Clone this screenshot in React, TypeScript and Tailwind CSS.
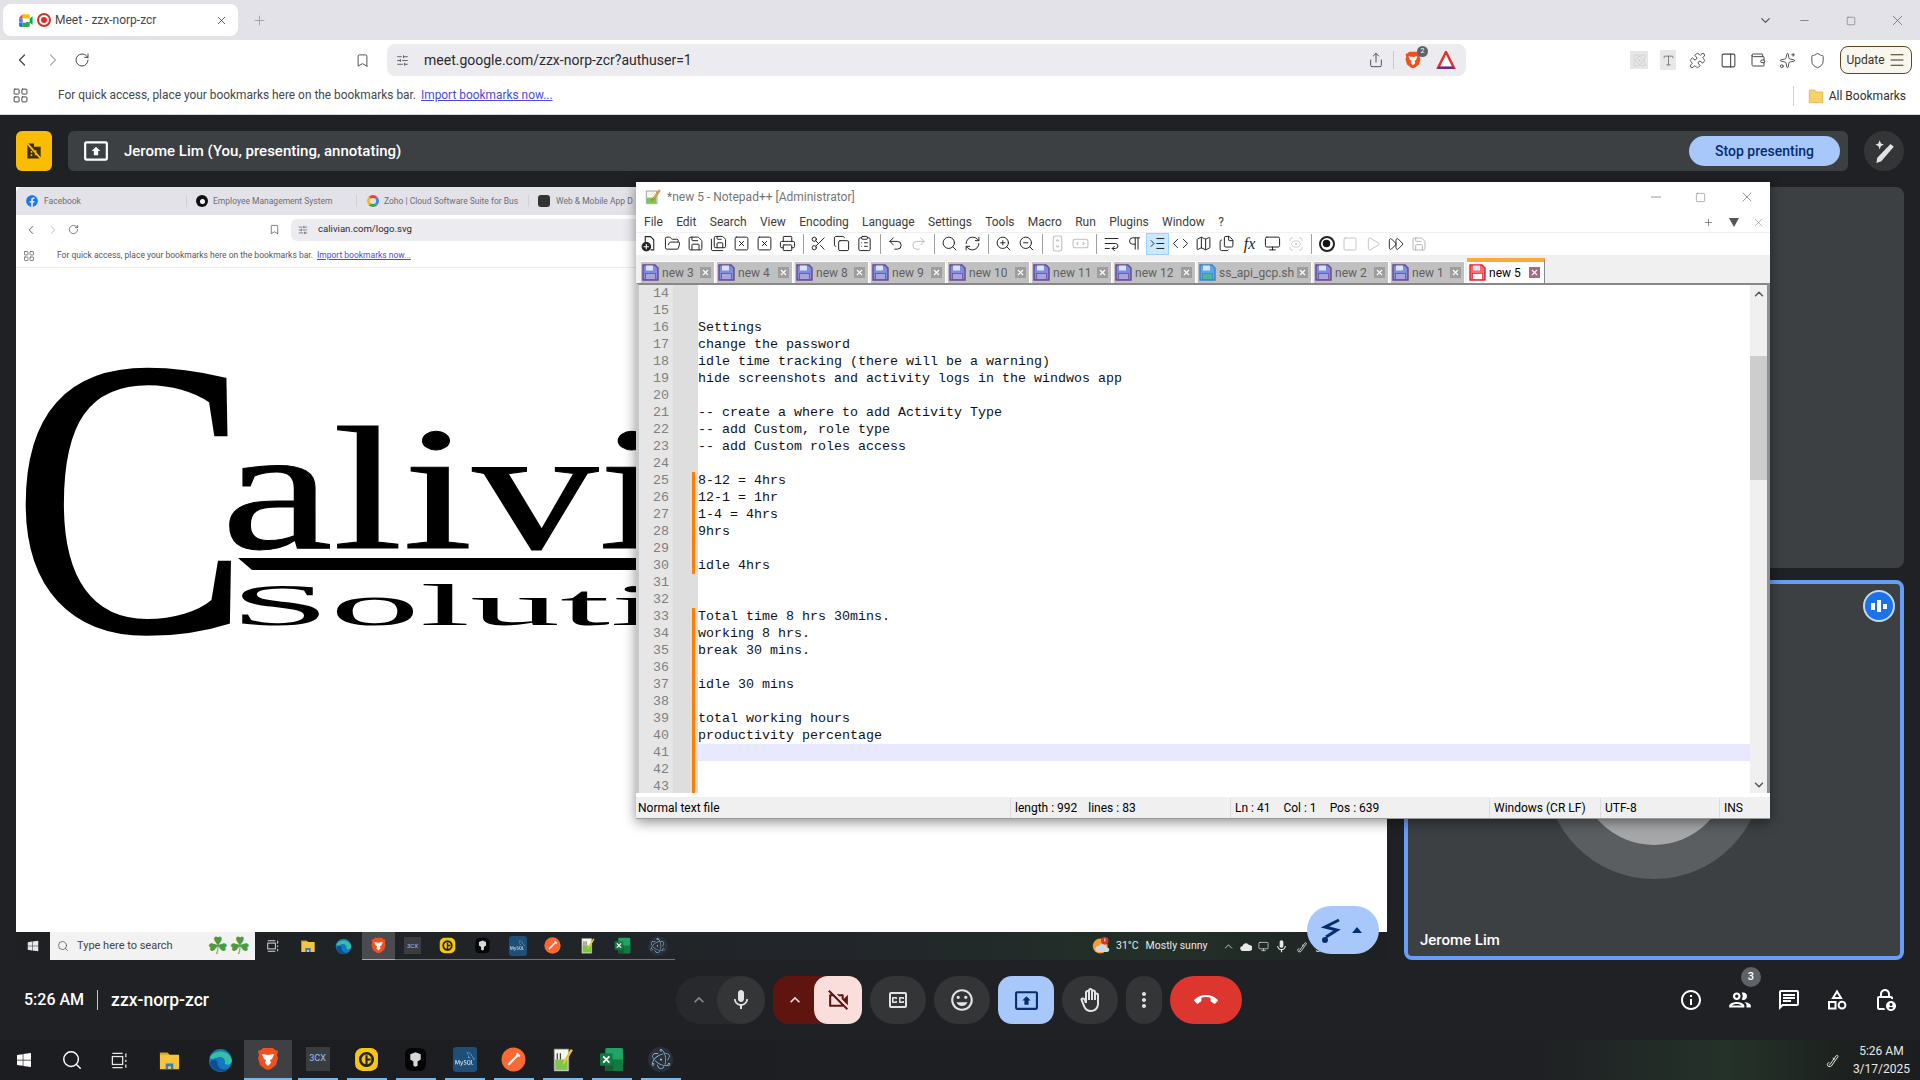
import {
  Atom,
  Bookmark,
  ChevronDown,
  ChevronLeft,
  ChevronRight,
  ChevronUp,
  Circle,
  ClipboardList,
  Code,
  Copy,
  FastForward,
  Files,
  FolderOpen,
  LayoutGrid,
  Map,
  Menu,
  Minus,
  Monitor,
  PanelRight,
  Pilcrow,
  Play,
  Plus,
  Printer,
  Puzzle,
  Redo2,
  RefreshCw,
  RotateCw,
  Save,
  SaveAll,
  Scissors,
  ScanEye,
  Search,
  Share,
  Shield,
  SlidersHorizontal,
  Sparkles,
  Square,
  SquareX,
  Undo2,
  Wallet,
  WrapText,
  X,
  ZoomIn,
  ZoomOut,
  IndentIncrease,
  Type,
} from "lucide-react";
import {
  MdCallEnd,
  MdKeyboardArrowUp,
  MdMic,
  MdMoreVert,
  MdOutlineBackHand,
  MdOutlineChat,
  MdOutlineClosedCaption,
  MdOutlineInfo,
  MdOutlineLockPerson,
  MdOutlineMood,
  MdOutlinePeople,
  MdOutlinePresentToAll,
  MdOutlineVideocamOff,
} from "react-icons/md";
import { SiElectron, SiMysql } from "react-icons/si";
import { FaFacebook, FaWindows } from "react-icons/fa";

const ROBOTO = "font-['Roboto',sans-serif]";

const CODE_LINES = [
  "", "", "Settings", "change the password", "idle time tracking (there will be a warning)",
  "hide screenshots and activity logs in the windwos app", "",
  "-- create a where to add Activity Type", "-- add Custom, role type", "-- add Custom roles access", "",
  "8-12 = 4hrs", "12-1 = 1hr", "1-4 = 4hrs", "9hrs", "", "idle 4hrs", "", "",
  "Total time 8 hrs 30mins.", "working 8 hrs.", "break 30 mins.", "", "idle 30 mins", "",
  "total working hours", "productivity percentage", "", "", "",
];

const NPP_TABS = [
  { name: "new 3", width: "w-[74px]" },
  { name: "new 4", width: "w-[76px]" },
  { name: "new 8", width: "w-[74px]" },
  { name: "new 9", width: "w-[75px]" },
  { name: "new 10", width: "w-[82px]" },
  { name: "new 11", width: "w-[80px]" },
  { name: "new 12", width: "w-[82px]" },
  { name: "ss_api_gcp.sh", width: "w-[114px]", blue: true },
  { name: "new 2", width: "w-[75px]" },
  { name: "new 1", width: "w-[74px]" },
];

const NPP_MENU = ["File", "Edit", "Search", "View", "Encoding", "Language", "Settings", "Tools", "Macro", "Run", "Plugins", "Window", "?"];

type ToolIconProps = { size?: number; strokeWidth?: number; className?: string };

function NewFile({ size = 17, className }: ToolIconProps) {
  return (
    <svg width={size} height={size} viewBox="0 0 16 16" fill="none" stroke="currentColor" className={className}>
      <path d="M4 7V1.500h5l3 3V14H9" />
      <circle cx="5" cy="11" r="4" fill="#222" />
      <path d="M5 8.500v5M2.500 11h5" stroke="#fff" />
    </svg>
  );
}

function SyncV({ size = 17, className }: ToolIconProps) {
  return (
    <svg width={size} height={size} viewBox="0 0 16 16" fill="none" stroke="currentColor" className={className}>
      <rect x="4" y="1" width="8" height="14" rx="2" />
      <path d="m6.500 6 1.500-1.500L9.500 6M6.500 10 8 11.500 9.500 10" />
    </svg>
  );
}

function SyncH({ size = 17, className }: ToolIconProps) {
  return (
    <svg width={size} height={size} viewBox="0 0 16 16" fill="none" stroke="currentColor" className={className}>
      <rect x="1" y="4" width="14" height="8" rx="2" />
      <path d="M6 6.500 4.500 8 6 9.500M10 6.500 11.500 8 10 9.500" />
    </svg>
  );
}

const NPP_TOOLS = [
  [NewFile, FolderOpen, Save, SaveAll, SquareX, SquareX, Printer],
  [Scissors, Copy, ClipboardList],
  [Undo2, Redo2],
  [Search, RefreshCw],
  [ZoomIn, ZoomOut],
  [SyncV, SyncH],
];

function MeetLogo({ size = 16 }: { size?: number }) {
  return (
    <svg width={size} height={size} viewBox="0 0 24 24">
      <path d="M3 8 8 3v6H3z" fill="#ea4335" />
      <path d="M3 9h5v6H3z" fill="#4285f4" />
      <path d="M3 15h5v6H5a2 2 0 0 1-2-2z" fill="#1a73e8" />
      <path d="M8 3h8a2 2 0 0 1 2 2v4h-5V9H8z" fill="#fbbc04" />
      <path d="M8 15h5v-1h5v5a2 2 0 0 1-2 2H8z" fill="#34a853" />
      <path d="m18 9 4-3v12l-4-3z" fill="#00ac47" />
    </svg>
  );
}

function BraveLogo({ size = 20 }: { size?: number }) {
  return (
    <svg width={size} height={size} viewBox="0 0 24 24">
      <path d="M12 1h5l2 2 3 1-1 4 1 3-2 7-5 4-3 1-3-1-5-4-2-7 1-3-1-4 3-1 2-2z" fill="#f1501f" />
      <path d="M12 8 6 7l2 5 2 1-1 3 3 3 3-3-1-3 2-1 2-5z" fill="#fff" />
    </svg>
  );
}

function FolderIcon({ size = 22 }: { size?: number }) {
  return (
    <svg width={size} height={size} viewBox="0 0 24 24">
      <path d="M2 4h8l2 2h10v15H2z" fill="#f5c542" />
      <path d="M2 4h8l2 2H2z" fill="#d9a520" />
      <path d="M8 21v-6h8v6h-2.500v-3h-3v3z" fill="#2f7fc1" />
    </svg>
  );
}

function EdgeIcon({ size = 22 }: { size?: number }) {
  return (
    <svg width={size} height={size} viewBox="0 0 24 24">
      <circle cx="12" cy="12" r="11" fill="#1377c4" />
      <path d="M2 9C5 2 20 0 23 12c0 4-5 5-7 3 2-4-3-8-7-6-4 1-6 3-7 0z" fill="#37c0a0" />
      <path d="M9 14c0 6 6 8 10 6-4 5-15 3-17-6 1-3 7-4 7 0z" fill="#0c4f8f" />
    </svg>
  );
}

function TaskView({ size = 18 }: { size?: number }) {
  return (
    <svg width={size} height={size} viewBox="0 0 24 24" fill="none" stroke="#e8e8e8" strokeWidth="1.600">
      <rect x="3" y="7" width="13" height="10" />
      <path d="M3 3h13M3 21h13M20 3v5M20 11v3M20 17v4" />
    </svg>
  );
}

function ThreeCx({ size = 24 }: { size?: number }) {
  return (
    <span
      className={`flex items-center justify-center bg-[#3a3c40] text-[#9fc3e8] ${ROBOTO} ${size > 20 ? "h-[24px] w-[24px] text-[9px]" : "h-[17px] w-[17px] text-[6px]"}`}
    >
      3CX
    </span>
  );
}

function YellowApp({ size = 24 }: { size?: number }) {
  return (
    <svg width={size} height={size} viewBox="0 0 24 24">
      <rect x="1" y="1" width="22" height="22" rx="7" fill="#f5c518" />
      <circle cx="12" cy="12" r="6" fill="none" stroke="#222" strokeWidth="2.500" />
      <path d="M12 8v11M12 12h4" stroke="#222" strokeWidth="2" />
    </svg>
  );
}

function CubeApp({ size = 24 }: { size?: number }) {
  return (
    <svg width={size} height={size} viewBox="0 0 24 24">
      <rect x="2" y="1" width="20" height="22" rx="6" fill="#050505" />
      <path d="M7 7l5-2 5 2v5l-3 2v4l-2 1-2-1v-4l-3-2z" fill="#d8d8d8" />
    </svg>
  );
}

function MysqlApp({ size = 24 }: { size?: number }) {
  return (
    <span className={`flex items-center justify-center rounded-[3px] bg-[#1d4f79] text-[#d4e4f0] ${size > 20 ? "h-[25px] w-[24px]" : "h-[20px] w-[18px]"}`}>
      <SiMysql size={size > 20 ? 20 : 15} />
    </span>
  );
}

function PostmanApp({ size = 24 }: { size?: number }) {
  return (
    <svg width={size} height={size} viewBox="0 0 24 24">
      <circle cx="12" cy="12" r="11.500" fill="#f76935" />
      <path d="M7 17 17 7M15 6l3 3" stroke="#fff" strokeWidth="2" fill="none" />
    </svg>
  );
}

function NotepadApp({ size = 24 }: { size?: number }) {
  return (
    <svg width={size} height={size} viewBox="0 0 24 24">
      <path d="M4 2h14v21H4z" fill="#f4f8e8" stroke="#888" strokeWidth="0.700" />
      <path d="M5 12h12v10H5z" fill="#7ec54a" />
      <path d="M7 6v6M10 6v6" stroke="#444" strokeWidth="1.200" />
      <path d="M12 15 20 2l2 1-8 13-2 1z" fill="#f0c030" />
    </svg>
  );
}

function ExcelApp({ size = 24 }: { size?: number }) {
  return (
    <svg width={size} height={size} viewBox="0 0 24 24">
      <rect x="6" y="1" width="17" height="22" rx="1.500" fill="#21a366" />
      <rect x="14" y="12" width="9" height="11" fill="#107c41" />
      <rect x="6" y="12" width="8" height="11" fill="#185c37" />
      <rect x="1" y="6" width="12" height="12" rx="1" fill="#107c41" />
      <path d="m4 9 6 6M10 9l-6 6" stroke="#fff" strokeWidth="1.600" />
    </svg>
  );
}

function ElectronApp({ size = 24 }: { size?: number }) {
  return (
    <span className={`flex items-center justify-center rounded-full bg-[#2b2e3b] text-[#9feaf9] ${size > 20 ? "h-[25px] w-[25px]" : "h-[20px] w-[20px]"}`}>
      <SiElectron size={size > 20 ? 20 : 15} />
    </span>
  );
}

function WeatherIcon() {
  return (
    <svg width="18" height="18" viewBox="0 0 24 24">
      <circle cx="11" cy="12" r="10" fill="#f59e2c" />
      <path d="M8 20a4 4 0 0 1 1-8 6 6 0 0 1 11 2 3 3 0 0 1 0 6z" fill="#cfd8e6" />
      <circle cx="17" cy="5" r="5" fill="#d9342b" />
      <rect x="16.500" y="2" width="1.200" height="4" fill="#fff" />
    </svg>
  );
}

function PenTray({ size = 16 }: { size?: number }) {
  return (
    <svg width={size} height={size} viewBox="0 0 24 24" fill="none" stroke="#e8e8e8" strokeWidth="1.500">
      <path d="M8 20 18 6c1-2 3-1 3 1L11 21c-2 2-6 1-6-2 0-2 1-3 3-3M13 9l3 2" />
    </svg>
  );
}

function ShapesIcon() {
  return (
    <svg width="24" height="24" viewBox="0 0 24 24" fill="none" stroke="currentColor" strokeWidth="2">
      <path d="M12 3.500 16 10H8z" />
      <rect x="4" y="14" width="6.500" height="6.500" />
      <circle cx="17" cy="17.200" r="3.400" />
    </svg>
  );
}

function AnnotatePen() {
  return (
    <svg width="26" height="26" viewBox="0 0 24 24" fill="currentColor">
      <path d="M18 5.500 21 8 9.500 21.500 5 23l.8-4.700z" />
      <path d="M8 2l1.200 3L12 6.200 9.200 7.400 8 10.500 6.800 7.400 4 6.200l2.800-1.200z" />
    </svg>
  );
}

const TASK_APPS = [ThreeCx, YellowApp, CubeApp, MysqlApp, PostmanApp, NotepadApp, ExcelApp, ElectronApp];

function ChromeTabStrip() {
  return (
    <div className="flex h-[40px] shrink-0 items-end bg-[#e3e2e8] pl-[3px]">
      <div className="mb-[4px] flex h-[32px] w-[235px] items-center rounded-[8px] bg-white pl-[14px] pr-[10px]">
        <MeetLogo size={17} />
        <span className="ml-[3px] flex h-[14px] w-[14px] items-center justify-center rounded-full border-2 border-[#d93025]">
          <span className="h-[6px] w-[6px] rounded-full bg-[#d93025]" />
        </span>
        <span className="ml-[4px] text-[12px] text-[#45474c]">Meet - zzx-norp-zcr</span>
        <X size={13} className="ml-auto text-[#45474c]" strokeWidth={1.6} />
      </div>
      <Plus size={15} strokeWidth={1.6} className="mb-[12px] ml-[14px] text-[#a6a6ac]" />
      <div className="mb-[11px] ml-auto flex items-center text-[#55565c]">
        <ChevronDown size={15} strokeWidth={2} />
        <Minus size={13} strokeWidth={1.2} className="ml-[25px]" />
        <Square size={10} strokeWidth={1.2} className="ml-[35px]" />
        <X size={17} strokeWidth={1} className="ml-[33px] mr-[14px]" />
      </div>
    </div>
  );
}

function ChromeToolbar() {
  return (
    <div className="flex h-[40px] shrink-0 items-center bg-white pl-[12px] text-[#45474c]">
      <ChevronLeft size={20} strokeWidth={1.5} />
      <ChevronRight size={20} strokeWidth={1.5} className="ml-[11px] text-[#b0b0b4]" />
      <RotateCw size={16} strokeWidth={1.5} className="ml-[11px]" />
      <Bookmark size={15} strokeWidth={1.5} className="ml-[265px]" />
      <div className="ml-[17px] flex h-[32px] w-[1079px] items-center rounded-[8px] bg-[#ecebf0] pl-[9px] pr-[10px]">
        <SlidersHorizontal size={13} strokeWidth={1.5} />
        <span className="ml-[15px] text-[14px] text-[#2a2b2f]">meet.google.com/zzx-norp-zcr?authuser=1</span>
        <Share size={16} strokeWidth={1.4} className="ml-auto" />
        <span className="ml-[9px] h-[18px] w-px bg-[#c8c8cc]" />
        <span className="relative ml-[10px]">
          <BraveLogo size={18} />
          <span className="absolute -right-[6px] -top-[5px] flex h-[11px] w-[11px] items-center justify-center rounded-full bg-[#5f6368] text-[7px] text-white">2</span>
        </span>
        <svg width="20" height="18" viewBox="0 0 20 18" className="ml-[14px]">
          <path d="M10 1 18 17H2z" fill="#fff" stroke="#e0342a" strokeWidth="2.500" />
          <path d="M3 15.500h14L18.500 18h-17z" fill="#662d91" />
        </svg>
      </div>
      <div className="ml-[164px] flex h-[18px] w-[18px] items-center justify-center bg-[#e6e6e6] text-[#c8c8c8]">
        <Atom size={15} strokeWidth={1.2} />
      </div>
      <div className="ml-[12px] flex h-[20px] w-[16px] items-center justify-center bg-[#e8e8e8] text-[#6b6b6b]">
        <Type size={13} strokeWidth={1.5} />
      </div>
      <Puzzle size={17} strokeWidth={1.3} className="ml-[13px]" />
      <PanelRight size={17} strokeWidth={1.5} className="ml-[14px]" />
      <Wallet size={16} strokeWidth={1.5} className="ml-[13px]" />
      <Sparkles size={17} strokeWidth={1.3} className="ml-[13px]" />
      <Shield size={17} strokeWidth={1.3} className="ml-[13px]" />
      <div className="ml-[14px] flex h-[28px] w-[72px] items-center justify-center gap-[3px] rounded-[8px] border border-[#5a4a20] bg-[#f8f6ee] text-[12px] text-[#3c3418]">
        Update <Menu size={18} strokeWidth={1.4} />
      </div>
    </div>
  );
}

function BookmarksBar() {
  return (
    <div className="flex h-[35px] shrink-0 items-center border-b border-[#d6d6d8] bg-white pb-[3px] pl-[12px] text-[11.900px] text-[#45474c]">
      <LayoutGrid size={17} strokeWidth={1.4} />
      <span className="ml-[29px]">For quick access, place your bookmarks here on the bookmarks bar.</span>
      <span className="ml-[5px] text-[#4a4adf] underline">Import bookmarks now...</span>
      <span className="ml-auto h-[20px] w-px bg-[#d0d0d4]" />
      <svg width="16" height="16" viewBox="0 0 24 24" className="ml-[14px]">
        <path d="M2 3h8l2 3h10v16H2z" fill="#fad165" stroke="#d3a940" />
      </svg>
      <span className="ml-[5px] mr-[14px] text-[12px] text-[#2f3034]">All Bookmarks</span>
    </div>
  );
}

function MeetBar() {
  return (
    <div className="flex h-[40px] gap-[16px]">
      <div className="flex w-[36px] items-center justify-center rounded-[6px] bg-[#fbbc04] text-[#3c3000]">
        <svg width="20" height="20" viewBox="0 0 24 24" fill="currentColor">
          <path d="M4 3h8v4h8v14H4z" />
          <path d="M3 2 21 22" stroke="#fbbc04" strokeWidth="2" />
          <path d="M8 8h2v2H8zM8 12h2v2H8zM8 16h2v2H8zM13 11h2v2h-2zM13 15h2v2h-2z" fill="#fbbc04" />
        </svg>
      </div>
      <div className="flex w-[1780px] items-center rounded-[6px] bg-[#3c4043] pl-[15px] pr-[8px] text-white">
        <MdOutlinePresentToAll size={26} />
        <span className="ml-[15px] text-[15px] font-medium">Jerome Lim (You, presenting, annotating)</span>
        <button className="ml-auto h-[30px] w-[151px] rounded-full bg-[#a8c7fa] text-[14px] font-medium text-[#062e6f]">Stop presenting</button>
      </div>
      <div className="flex w-[40px] items-center justify-center rounded-full bg-[#333537] text-[#e3e3e3]">
        <AnnotatePen />
      </div>
    </div>
  );
}

function SharedScreen() {
  return (
    <div className="flex w-[1371px] flex-col overflow-hidden bg-white">
      <div className="flex h-[28px] shrink-0 items-center rounded-t-[6px] bg-[#e3e2e8] pl-[10px] text-[8.500px] text-[#6c6d72]">
        <div className="flex w-[161px] items-center border-r border-[#cfcfd4]">
          <FaFacebook size={12} className="text-[#1877f2]" />
          <span className="ml-[6px]">Facebook</span>
        </div>
        <div className="flex w-[170px] items-center border-r border-[#cfcfd4] pl-[9px]">
          <span className="flex h-[12px] w-[12px] items-center justify-center rounded-full bg-[#111]">
            <span className="h-[5px] w-[5px] rounded-full bg-white" />
          </span>
          <span className="ml-[5px]">Employee Management System</span>
        </div>
        <div className="flex w-[172px] items-center border-r border-[#cfcfd4] pl-[10px]">
          <span className="h-[12px] w-[12px] rounded-full border-[3px] border-b-[#34a853] border-l-[#fbbc04] border-r-[#4285f4] border-t-[#ea4335]" />
          <span className="ml-[5px] whitespace-nowrap">Zoho | Cloud Software Suite for Bus</span>
        </div>
        <div className="flex items-center pl-[9px]">
          <span className="h-[12px] w-[12px] rounded-[3px] bg-[#333]" />
          <span className="ml-[6px]">Web &amp; Mobile App D</span>
        </div>
      </div>
      <div className="flex h-[28px] shrink-0 items-center bg-white pl-[8px] pt-[1px] text-[#45474c]">
        <ChevronLeft size={14} strokeWidth={1.5} />
        <ChevronRight size={14} strokeWidth={1.5} className="ml-[8px] text-[#b5b5b8]" />
        <RotateCw size={11} strokeWidth={1.5} className="ml-[8px]" />
        <Bookmark size={11} strokeWidth={1.5} className="ml-[190px]" />
        <div className="ml-[11px] flex h-[22px] w-[400px] items-center rounded-l-[6px] bg-[#ecebf0] pl-[7px]">
          <SlidersHorizontal size={10} strokeWidth={1.5} />
          <span className="ml-[10px] text-[9.600px] text-[#2a2b2f]">calivian.com/logo.svg</span>
        </div>
      </div>
      <div className="flex h-[25px] shrink-0 items-center border-b border-[#ececee] pl-[7px] pt-[1px] text-[8.500px] text-[#55565a]">
        <LayoutGrid size={12} strokeWidth={1.4} />
        <span className="ml-[22px]">For quick access, place your bookmarks here on the bookmarks bar.</span>
        <span className="ml-[4px] text-[#4a4adf] underline">Import bookmarks now...</span>
      </div>
      <div className="relative flex-1 overflow-hidden font-['Liberation_Serif',serif] text-black">
        <span className="absolute left-[-4px] top-[32px] origin-top-left scale-x-[0.9] text-[396px] leading-none [-webkit-text-stroke:2px_black]">C</span>
        <span className="absolute left-[205px] top-[133px] origin-top-left scale-x-[1.43] text-[176px] leading-none [-webkit-text-stroke:1px_black]">alivi</span>
        <svg width="700" height="14" viewBox="0 0 700 14" className="absolute left-[222px] top-[290px]">
          <path d="M0 0h700v12H14z" fill="#000" />
        </svg>
        <span className="absolute left-[214px] top-[307px] origin-top-left scale-x-[3] text-[60px] leading-none">Soluti</span>
      </div>
      <InnerTaskbar />
    </div>
  );
}

function InnerTaskbar() {
  return (
    <div className="flex h-[28px] shrink-0 items-center bg-[linear-gradient(90deg,#1e2023_0%,#22262a_60%,#233028_85%,#1e2023_100%)] text-[#e8e8e8]">
      <div className="flex w-[34px] justify-center">
        <FaWindows size={12} />
      </div>
      <div className="flex h-[28px] w-[205px] items-center bg-[#f2f2f2] pl-[7px] text-[11px] text-[#444]">
        <Search size={12} strokeWidth={1.4} />
        <span className="ml-[8px]">Type here to search</span>
        <span className="ml-auto mr-[4px] flex text-[24px] leading-none text-[#4f9a3f]">☘☘</span>
      </div>
      <div className="flex items-center">
        <div className="flex w-[35px] justify-center">
          <TaskView size={14} />
        </div>
        <div className="flex w-[36px] justify-center">
          <FolderIcon size={16} />
        </div>
        <div className="flex w-[35px] justify-center">
          <EdgeIcon size={17} />
        </div>
        <div className="ml-[1px] flex h-[28px] w-[33px] items-center justify-center border-b border-[#76b9ed] bg-[#4a4b4e]">
          <BraveLogo size={17} />
        </div>
        {TASK_APPS.map((App, i) => (
          <div key={i} className="flex h-[28px] w-[35px] items-center justify-center border-b border-[#4a7ea8]">
            <App size={17} />
          </div>
        ))}
      </div>
      <div className="ml-[417px] flex items-center">
        <WeatherIcon />
        <span className="ml-[6px] text-[10.500px]">31°C</span>
        <span className="ml-[7px] text-[10.500px]">Mostly sunny</span>
        <ChevronUp size={13} strokeWidth={1.5} className="ml-[15px]" />
        <svg width="12" height="9" viewBox="0 0 24 18" className="ml-[5px]" fill="#e8e8e8">
          <path d="M6 18a5 5 0 0 1-1-10 7 7 0 0 1 13-2 6 6 0 0 1 1 12z" />
        </svg>
        <Monitor size={11} strokeWidth={1.5} className="ml-[6px]" />
        <MdMic size={15} className="ml-[5px]" />
        <span className="ml-[6px]">
          <PenTray size={13} />
        </span>
        <span className="ml-[7px] self-end text-[9px] leading-[12px]">3/17/2025</span>
      </div>
    </div>
  );
}

function FloppyIcon({ kind }: { kind: "purple" | "blue" | "red" }) {
  const colors = {
    purple: { edge: "#6a4590", fill: "#7d8fdc", low: "#a9a4df" },
    blue: { edge: "#3b82c4", fill: "#5aa8ee", low: "#4fb59a" },
    red: { edge: "#e0232e", fill: "#ff6b70", low: "#fff" },
  }[kind];
  return (
    <svg width="17" height="17" viewBox="0 0 17 17" className="shrink-0">
      <path d="M1 1h12l3 3v12H1z" fill={colors.fill} stroke={colors.edge} strokeWidth="1.400" />
      <rect x="4" y="1.500" width="7" height="5" fill="#d8e2f8" />
      <rect x="3.500" y="9.500" width="10" height="6" fill={colors.low} stroke={colors.edge} strokeWidth="0.700" />
    </svg>
  );
}

function NppTab({ name, width, blue }: { name: string; width: string; blue?: boolean }) {
  return (
    <div className={`flex h-[22px] items-center border-r border-t border-white bg-[#c0c0c0] pl-[1px] pr-[3px] text-[12px] text-[#5f5f5f] ${width}`}>
      <FloppyIcon kind={blue ? "blue" : "purple"} />
      <span className="ml-[3px] truncate">{name}</span>
      <span className="ml-auto flex h-[11px] w-[11px] shrink-0 items-center justify-center bg-[#9d9d9d] text-white">
        <X size={9} strokeWidth={3} />
      </span>
    </div>
  );
}

function NotepadWindow() {
  return (
    <div className={`absolute left-[636px] top-[182px] flex h-[637px] w-[1134px] flex-col bg-white shadow-[0_3px_12px_rgba(0,0,0,0.45)] ${ROBOTO}`}>
      <div className="flex h-[30px] shrink-0 items-center pl-[9px] text-[12px] text-[#757575]">
        <svg width="16" height="16" viewBox="0 0 24 24">
          <path d="M2 3h16v19H2z" fill="#f4f8e8" stroke="#777" />
          <path d="M3 13h14v8H3z" fill="#7ec54a" />
          <path d="M11 15 21 1l2 2-10 13-3 1z" fill="#e9b92f" stroke="#8b1a1a" strokeWidth="0.600" />
        </svg>
        <span className="ml-[6px]">*new 5 - Notepad++ [Administrator]</span>
        <Minus size={16} strokeWidth={1} className="ml-auto text-[#666]" />
        <Square size={11} strokeWidth={1} className="ml-[31px] text-[#555]" />
        <X size={16} strokeWidth={1} className="ml-[33px] mr-[15px] text-[#666]" />
      </div>
      <div className="flex h-[20px] shrink-0 items-center gap-[13.300px] pl-[8px] text-[12px] text-[#3c3c3c]">
        {NPP_MENU.map((item) => (
          <span key={item}>{item}</span>
        ))}
        <Plus size={11} strokeWidth={1.2} className="ml-auto text-[#333]" />
        <svg width="10" height="9" viewBox="0 0 10 9" className="ml-[1px]">
          <path d="M0 0h10L5 9z" fill="#555" />
        </svg>
        <X size={13} strokeWidth={1} className="mr-[5px] text-[#777]" />
      </div>
      <div className="flex h-[24px] shrink-0 items-center border-y border-[#f0f0f0] pb-[1px] pl-[2px] text-[#222]">
        {NPP_TOOLS.map((group, g) => (
          <div key={g} className="flex items-center">
            {g > 0 && <span className="mx-[3.500px] h-[20px] w-px bg-[#a0a0a0]" />}
            {group.map((Icon, i) => (
              <span key={i} className="flex w-[23px] justify-center">
                <Icon size={17} strokeWidth={1.4} className={g === 2 && i === 1 ? "text-[#bbb]" : g === 5 ? "text-[#c0c0c0]" : ""} />
              </span>
            ))}
          </div>
        ))}
        <span className="mx-[3.500px] h-[20px] w-px bg-[#a0a0a0]" />
        <span className="flex w-[23px] justify-center">
          <WrapText size={17} strokeWidth={1.4} />
        </span>
        <span className="flex w-[23px] justify-center">
          <Pilcrow size={17} strokeWidth={1.4} />
        </span>
        <span className="flex h-[22px] w-[23px] items-center justify-center border border-[#99d1ff] bg-[#cce8ff]">
          <IndentIncrease size={17} strokeWidth={1.4} />
        </span>
        <span className="flex w-[23px] justify-center">
          <Code size={17} strokeWidth={1.4} />
        </span>
        <span className="flex w-[23px] justify-center">
          <Map size={17} strokeWidth={1.4} />
        </span>
        <span className="flex w-[23px] justify-center">
          <Files size={17} strokeWidth={1.4} />
        </span>
        <span className="flex w-[23px] justify-center font-['Liberation_Serif',serif] text-[16px] italic leading-none">fx</span>
        <span className="flex w-[23px] justify-center">
          <Monitor size={17} strokeWidth={1.4} />
        </span>
        <span className="flex w-[23px] justify-center">
          <ScanEye size={16} strokeWidth={1.2} className="text-[#c0c0c0]" />
        </span>
        <span className="mx-[3.500px] h-[20px] w-px bg-[#a0a0a0]" />
        <span className="flex w-[23px] justify-center">
          <span className="flex h-[16px] w-[16px] items-center justify-center rounded-full border-2 border-[#222]">
            <Circle size={9} fill="#111" strokeWidth={0} />
          </span>
        </span>
        <span className="flex w-[23px] justify-center">
          <Square size={16} strokeWidth={1} className="text-[#a8a8a8]" />
        </span>
        <span className="flex w-[23px] justify-center">
          <Play size={16} strokeWidth={1} className="text-[#a8a8a8]" />
        </span>
        <span className="flex w-[23px] justify-center">
          <FastForward size={16} strokeWidth={1.4} />
        </span>
        <span className="flex w-[23px] justify-center">
          <Save size={16} strokeWidth={1.3} className="text-[#aaa]" />
        </span>
      </div>
      <div className="flex h-[27px] shrink-0 items-end gap-[2px] bg-[#f0f0f0] pl-[5px]">
        {NPP_TABS.map((tab) => (
          <NppTab key={tab.name} {...tab} />
        ))}
        <div className="flex h-[25px] w-[78px] items-center border-r border-[#888] border-t-[4px] border-t-[#faa93a] bg-white pl-[2px] pr-[4px] text-[12px] text-black">
          <FloppyIcon kind="red" />
          <span className="ml-[3px]">new 5</span>
          <span className="ml-auto flex h-[11px] w-[11px] items-center justify-center bg-[#a86a80] text-white">
            <X size={9} strokeWidth={3} />
          </span>
        </div>
      </div>
      <div className="flex min-h-0 flex-1 border-l-[3px] border-r-[3px] border-t-2 border-[#a0a0a0] border-l-[#c8c8c8] border-r-[#8f8f8f] border-t-[#888]">
        <div className="min-w-0 flex-1 overflow-hidden font-['Liberation_Mono',monospace] text-[13.330px] leading-[17px]">
          {CODE_LINES.map((line, i) => {
            const no = i + 14;
            const changed = (no >= 25 && no <= 30) || no >= 33;
            return (
              <div key={no} className={`flex h-[17px] ${no === 41 ? "bg-[#e8e8ff]" : ""}`}>
                <span className="w-[34px] shrink-0 bg-[#e6e6e6] pr-[4px] text-right text-[#808080]">{no}</span>
                <span className="flex w-[25px] shrink-0 bg-[#dedede] pl-[19px]">
                  <span className={`h-[17px] w-[3px] ${changed ? "bg-[#ff8000]" : ""}`} />
                </span>
                <span className="whitespace-pre text-[#111]">{line}</span>
              </div>
            );
          })}
        </div>
        <div className="flex w-[17px] shrink-0 flex-col items-center bg-[#f0f0f0] text-[#555]">
          <ChevronUp size={14} strokeWidth={2.5} className="mt-[2px]" />
          <div className="mt-[55px] h-[124px] w-full bg-[#cdcdcd]" />
          <ChevronDown size={14} strokeWidth={2.5} className="mt-auto mb-[1px]" />
        </div>
      </div>
      <div className="flex h-[26px] shrink-0 items-center border-b border-[#999] border-t-[4px] border-t-white bg-[#f0f0f0] pt-[1px] text-[12px] text-black">
        <span className="w-[374px] pl-[2px]">Normal text file</span>
        <span className="flex h-full w-[220px] items-center gap-[11px] border-l border-[#dcdcdc] pl-[4px]">
          <span>length : 992</span>
          <span>lines : 83</span>
        </span>
        <span className="flex h-full w-[259px] items-center gap-[13px] border-l border-[#dcdcdc] pl-[4px]">
          <span>Ln : 41</span>
          <span>Col : 1</span>
          <span>Pos : 639</span>
        </span>
        <span className="flex h-full w-[111px] items-center border-l border-[#dcdcdc] pl-[4px]">Windows (CR LF)</span>
        <span className="flex h-full w-[119px] items-center border-l border-[#dcdcdc] pl-[4px]">UTF-8</span>
        <span className="flex h-full w-[31px] items-center border-l border-[#dcdcdc] pl-[4px]">INS</span>
      </div>
    </div>
  );
}

function ParticipantTiles() {
  return (
    <div className="flex w-[500px] flex-col gap-[12px]">
      <div className="h-[381px] rounded-[8px] bg-[#3c4043]" />
      <div className="relative flex h-[380px] items-center justify-center rounded-[8px] border-4 border-[#669df6] bg-[#3c4043]">
        <div className="flex h-[218px] w-[218px] items-center justify-center rounded-full bg-[#5a5e61]">
          <div className="h-[150px] w-[150px] rounded-full bg-[#a5a7a9]" />
        </div>
        <span className="absolute bottom-[5px] left-[12px] text-[15px] font-medium text-white">Jerome Lim</span>
        <span className="absolute right-[5px] top-[6px] flex h-[32px] w-[32px] items-center justify-center gap-[2px] rounded-full border-2 border-[#c3d7f2] bg-[#1a73e8]">
          <span className="h-[7px] w-[4px] bg-white" />
          <span className="h-[12px] w-[4px] bg-white" />
          <span className="h-[5px] w-[4px] bg-white" />
        </span>
      </div>
    </div>
  );
}

function ControlBar() {
  return (
    <div className="flex h-[80px] shrink-0 items-center pl-[24px] pr-[23px] text-white">
      <div className="flex w-[652px] items-center text-[16px] font-medium">
        <span>5:26 AM</span>
        <span className="mx-[13px] h-[20px] w-px bg-[#c4c7c5]" />
        <span className="text-[17.500px]">zzx-norp-zcr</span>
      </div>
      <div className="flex items-center gap-[8px]">
        <div className="flex h-[48px] w-[89px] items-center rounded-full bg-[#28292c] text-[#8a8b8d]">
          <span className="flex w-[41px] justify-center pl-[4px]">
            <MdKeyboardArrowUp size={20} />
          </span>
          <span className="flex h-[48px] w-[48px] items-center justify-center rounded-full bg-[#333537] text-[#e3e3e3]">
            <MdMic size={24} />
          </span>
        </div>
        <div className="flex h-[48px] w-[89px] items-center rounded-[16px] bg-[#601410] text-[#f9dedc]">
          <span className="flex w-[41px] justify-center pl-[2px]">
            <MdKeyboardArrowUp size={20} />
          </span>
          <span className="flex h-[48px] w-[48px] items-center justify-center rounded-[14px] bg-[#f9dedc] text-[#601410]">
            <MdOutlineVideocamOff size={25} />
          </span>
        </div>
        <span className="flex h-[48px] w-[56px] items-center justify-center rounded-full bg-[#333537] text-[#e3e3e3]">
          <MdOutlineClosedCaption size={24} />
        </span>
        <span className="flex h-[48px] w-[56px] items-center justify-center rounded-full bg-[#333537] text-[#e3e3e3]">
          <MdOutlineMood size={26} />
        </span>
        <span className="flex h-[48px] w-[56px] items-center justify-center rounded-[14px] bg-[#a8c7fa] text-[#062e6f]">
          <MdOutlinePresentToAll size={25} />
        </span>
        <span className="flex h-[48px] w-[56px] items-center justify-center rounded-full bg-[#333537] text-[#e3e3e3]">
          <MdOutlineBackHand size={24} />
        </span>
        <span className="flex h-[48px] w-[36px] items-center justify-center rounded-full bg-[#333537] text-[#e3e3e3]">
          <MdMoreVert size={24} />
        </span>
        <span className="flex h-[48px] w-[72px] items-center justify-center rounded-full bg-[#dc362e] text-white">
          <MdCallEnd size={24} />
        </span>
      </div>
      <div className="ml-auto flex items-center gap-[24px]">
        <MdOutlineInfo size={24} />
        <span className="relative">
          <MdOutlinePeople size={26} />
          <span className="absolute -top-[20px] left-[14px] flex h-[20px] w-[20px] items-center justify-center rounded-full bg-[#5f6368] text-[11px] font-medium">3</span>
        </span>
        <MdOutlineChat size={24} />
        <ShapesIcon />
        <MdOutlineLockPerson size={24} />
      </div>
    </div>
  );
}

function WinTaskbar() {
  return (
    <div className="flex h-[40px] shrink-0 items-center bg-[linear-gradient(90deg,#1c1d20_0%,#1f2023_80%,#243229_90%,#1d211f_96%,#1c1d20_100%)] text-white">
      <div className="flex w-[48px] justify-center">
        <FaWindows size={16} />
      </div>
      <div className="flex w-[48px] justify-center">
        <Search size={22} strokeWidth={1.6} />
      </div>
      <div className="flex w-[47px] justify-center">
        <TaskView size={19} />
      </div>
      <div className="flex w-[53px] justify-center">
        <FolderIcon size={23} />
      </div>
      <div className="flex w-[48px] justify-center">
        <EdgeIcon size={25} />
      </div>
      <div className="flex h-[40px] w-[48px] items-center justify-center border-b-2 border-[#76b9ed] bg-[#3f4043]">
        <BraveLogo size={24} />
      </div>
      <div className="ml-[1px] flex">
        {TASK_APPS.map((App, i) => (
          <div key={i} className="flex h-[40px] w-[49px] items-center justify-center">
            <div className="flex h-[40px] w-[40px] items-center justify-center border-b-2 border-[#76b9ed]">
              <App size={25} />
            </div>
          </div>
        ))}
      </div>
      <div className="ml-auto flex items-center">
        <PenTray size={16} />
        <div className={`ml-[13px] mr-[10px] flex flex-col items-center text-[12px] leading-[18px] text-[#e8e8e8] ${ROBOTO}`}>
          <span>5:26 AM</span>
          <span>3/17/2025</span>
        </div>
      </div>
    </div>
  );
}

export default function App() {
  return (
    <div className={`flex h-[1080px] w-[1920px] flex-col overflow-hidden bg-[#202124] ${ROBOTO}`}>
      <ChromeTabStrip />
      <ChromeToolbar />
      <BookmarksBar />
      <div className="flex flex-col gap-[16px] px-[16px] pt-[16px]">
        <MeetBar />
        <div className="flex h-[773px] gap-[17px]">
          <SharedScreen />
          <ParticipantTiles />
        </div>
      </div>
      <ControlBar />
      <WinTaskbar />
      <NotepadWindow />
      <div className="absolute left-[1307px] top-[906px] flex h-[48px] w-[72px] items-center rounded-[24px] bg-[#a8c7fa] pl-[13px] text-[#062e6f]">
        <svg width="22" height="26" viewBox="0 0 22 26" fill="none" stroke="currentColor" strokeWidth="3">
          <path d="M19 3 5 10l12 3L6 20" />
          <circle cx="5" cy="23" r="1.500" fill="currentColor" />
        </svg>
        <svg width="10" height="6" viewBox="0 0 10 6" className="ml-[10px]">
          <path d="M5 0 10 6H0z" fill="currentColor" />
        </svg>
      </div>
    </div>
  );
}
